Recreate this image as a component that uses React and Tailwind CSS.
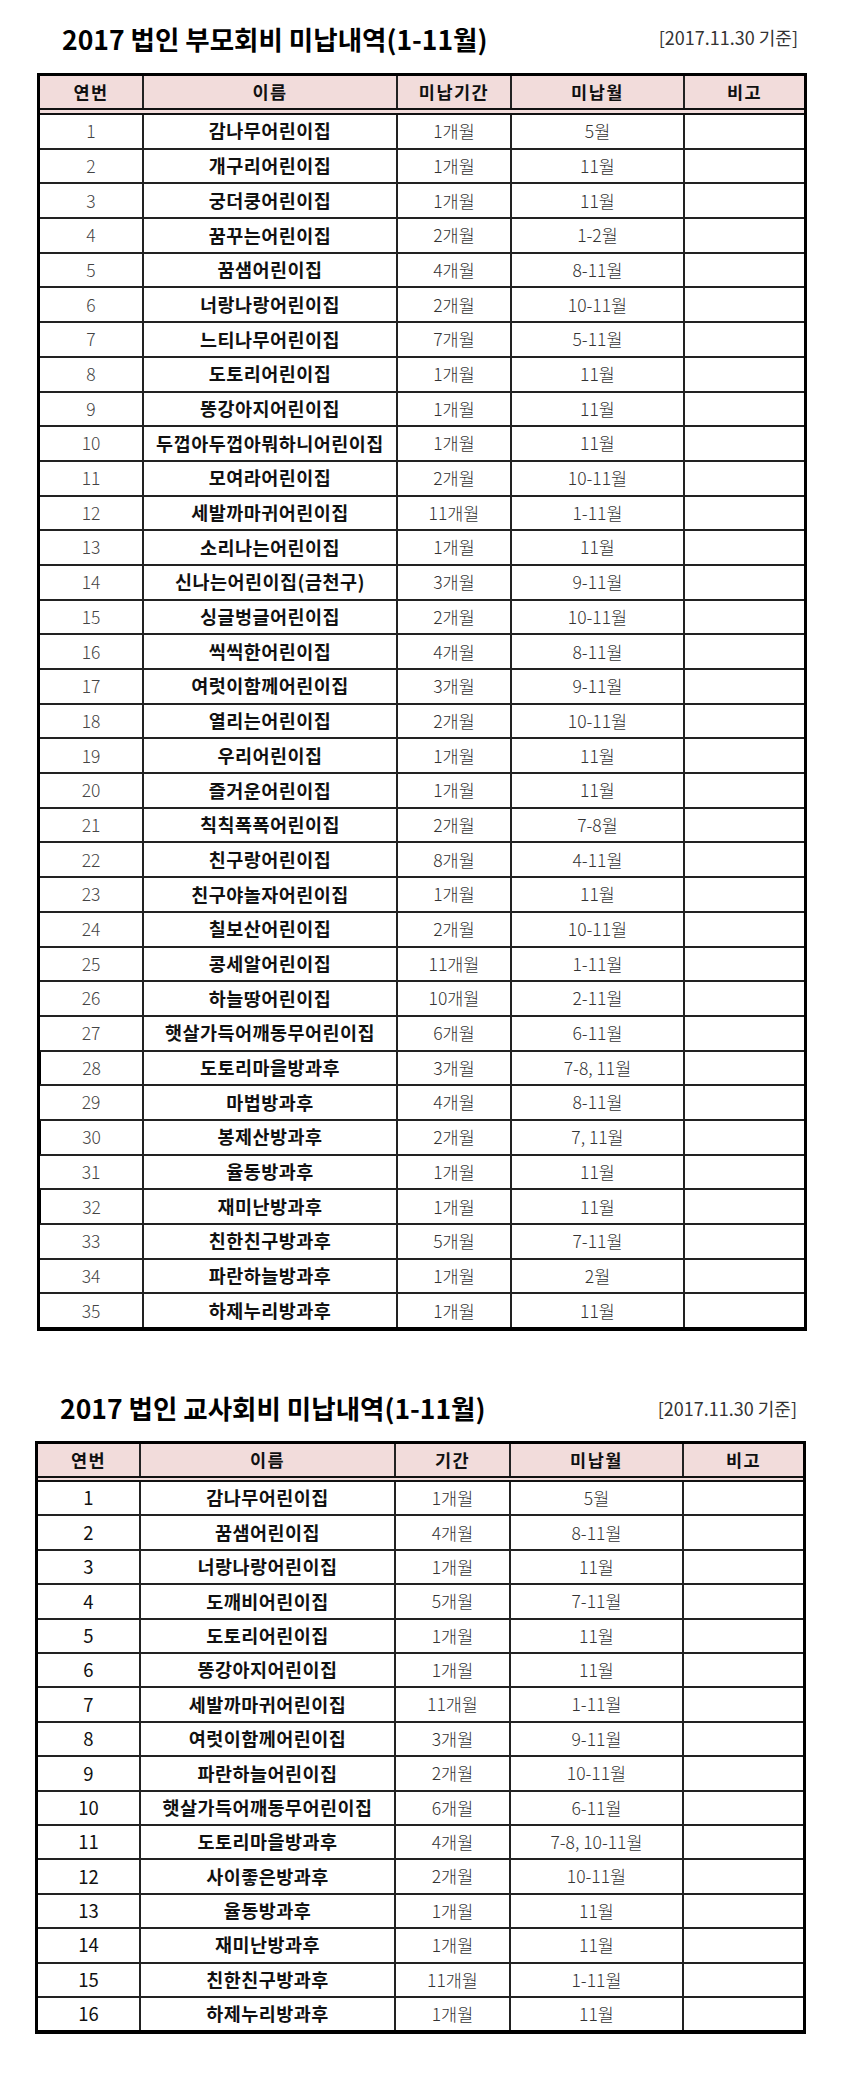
import React from "react";

const t1 = [
  ["1", "감나무어린이집", "1개월", "5월"],
  ["2", "개구리어린이집", "1개월", "11월"],
  ["3", "궁더쿵어린이집", "1개월", "11월"],
  ["4", "꿈꾸는어린이집", "2개월", "1-2월"],
  ["5", "꿈샘어린이집", "4개월", "8-11월"],
  ["6", "너랑나랑어린이집", "2개월", "10-11월"],
  ["7", "느티나무어린이집", "7개월", "5-11월"],
  ["8", "도토리어린이집", "1개월", "11월"],
  ["9", "똥강아지어린이집", "1개월", "11월"],
  ["10", "두껍아두껍아뭐하니어린이집", "1개월", "11월"],
  ["11", "모여라어린이집", "2개월", "10-11월"],
  ["12", "세발까마귀어린이집", "11개월", "1-11월"],
  ["13", "소리나는어린이집", "1개월", "11월"],
  ["14", "신나는어린이집(금천구)", "3개월", "9-11월"],
  ["15", "싱글벙글어린이집", "2개월", "10-11월"],
  ["16", "씩씩한어린이집", "4개월", "8-11월"],
  ["17", "여럿이함께어린이집", "3개월", "9-11월"],
  ["18", "열리는어린이집", "2개월", "10-11월"],
  ["19", "우리어린이집", "1개월", "11월"],
  ["20", "즐거운어린이집", "1개월", "11월"],
  ["21", "칙칙폭폭어린이집", "2개월", "7-8월"],
  ["22", "친구랑어린이집", "8개월", "4-11월"],
  ["23", "친구야놀자어린이집", "1개월", "11월"],
  ["24", "칠보산어린이집", "2개월", "10-11월"],
  ["25", "콩세알어린이집", "11개월", "1-11월"],
  ["26", "하늘땅어린이집", "10개월", "2-11월"],
  ["27", "햇살가득어깨동무어린이집", "6개월", "6-11월"],
  ["28", "도토리마을방과후", "3개월", "7-8, 11월"],
  ["29", "마법방과후", "4개월", "8-11월"],
  ["30", "봉제산방과후", "2개월", "7, 11월"],
  ["31", "율동방과후", "1개월", "11월"],
  ["32", "재미난방과후", "1개월", "11월"],
  ["33", "친한친구방과후", "5개월", "7-11월"],
  ["34", "파란하늘방과후", "1개월", "2월"],
  ["35", "하제누리방과후", "1개월", "11월"],
];

const t2 = [
  ["1", "감나무어린이집", "1개월", "5월"],
  ["2", "꿈샘어린이집", "4개월", "8-11월"],
  ["3", "너랑나랑어린이집", "1개월", "11월"],
  ["4", "도깨비어린이집", "5개월", "7-11월"],
  ["5", "도토리어린이집", "1개월", "11월"],
  ["6", "똥강아지어린이집", "1개월", "11월"],
  ["7", "세발까마귀어린이집", "11개월", "1-11월"],
  ["8", "여럿이함께어린이집", "3개월", "9-11월"],
  ["9", "파란하늘어린이집", "2개월", "10-11월"],
  ["10", "햇살가득어깨동무어린이집", "6개월", "6-11월"],
  ["11", "도토리마을방과후", "4개월", "7-8, 10-11월"],
  ["12", "사이좋은방과후", "2개월", "10-11월"],
  ["13", "율동방과후", "1개월", "11월"],
  ["14", "재미난방과후", "1개월", "11월"],
  ["15", "친한친구방과후", "11개월", "1-11월"],
  ["16", "하제누리방과후", "1개월", "11월"],
];

const FONT = { fontFamily: '"Noto Sans CJK KR", "Noto Sans", sans-serif' };

function Table1() {
  const w = ["w-[104px]", "w-[254px]", "w-[114px]", "w-[173px]", "flex-1"];
  const heads = ["연번", "이름", "미납기간", "미납월", "비고"];
  return (
    <div className="ml-[37px] w-[770px] border-[3px] border-b-4 border-black bg-white">
      <div className="flex h-[39px] bg-[#f2dcdb] border-b-[7px] border-double border-[#111]">
        {heads.map((h, i) => (
          <div
            key={h}
            className={`${w[i]} ${i < 4 ? "border-r-2 border-[#222]" : ""} flex items-center justify-center text-[17.5px] font-bold tracking-[1.5px] text-[#111]`}
          >
            {h}
          </div>
        ))}
      </div>
      {t1.map((r, idx) => {
        const last = idx === t1.length - 1;
        const special = r[0] === "28" || r[0] === "30" || r[0] === "32";
        return (
          <div
            key={r[0]}
            className={`flex ${last ? "h-[32.7px]" : "h-[34.7px] border-b-2 border-[#222]"}`}
          >
            <div className={`w-[104px] border-r-2 border-[#222] ${special ? "border-l-2 border-l-black -ml-[1px] w-[105px]" : ""} flex items-center justify-center text-[17.5px] font-light text-[#444]`}>
              {r[0]}
            </div>
            <div className="w-[254px] border-r-2 border-[#222] flex items-center justify-center text-[18.5px] font-bold tracking-[0.5px] text-[#111] whitespace-nowrap">
              {r[1]}
            </div>
            <div className="w-[114px] border-r-2 border-[#222] flex items-center justify-center text-[17.5px] font-light text-[#333]">
              {r[2]}
            </div>
            <div className="w-[173px] border-r-2 border-[#222] flex items-center justify-center text-[17.5px] font-light text-[#333]">
              {r[3]}
            </div>
            <div className="flex-1" />
          </div>
        );
      })}
    </div>
  );
}

function Table2() {
  const w = ["w-[103px]", "w-[255px]", "w-[115px]", "w-[173px]", "flex-1"];
  const heads = ["연번", "이름", "기간", "미납월", "비고"];
  return (
    <div className="ml-[35px] w-[771px] border-[3px] border-b-4 border-black bg-white">
      <div className="flex h-[38px] bg-[#f2dcdb] border-b-[6px] border-double border-[#111]">
        {heads.map((h, i) => (
          <div
            key={h}
            className={`${w[i]} ${i < 4 ? "border-r-2 border-[#222]" : ""} flex items-center justify-center text-[17.5px] font-bold tracking-[1.5px] text-[#111]`}
          >
            {h}
          </div>
        ))}
      </div>
      {t2.map((r, idx) => {
        const last = idx === t2.length - 1;
        return (
          <div
            key={r[0]}
            className={`flex ${last ? "h-[32.4px]" : "h-[34.4px] border-b-2 border-[#222]"}`}
          >
            <div className="w-[103px] border-r-2 border-[#222] flex items-center justify-center text-[18.5px] font-normal text-[#111]">
              {r[0]}
            </div>
            <div className="w-[255px] border-r-2 border-[#222] flex items-center justify-center text-[18.5px] font-bold tracking-[0.5px] text-[#111] whitespace-nowrap">
              {r[1]}
            </div>
            <div className="w-[115px] border-r-2 border-[#222] flex items-center justify-center text-[17.5px] font-light text-[#333]">
              {r[2]}
            </div>
            <div className="w-[173px] border-r-2 border-[#222] flex items-center justify-center text-[17.5px] font-light text-[#333]">
              {r[3]}
            </div>
            <div className="flex-1" />
          </div>
        );
      })}
    </div>
  );
}

export default function App() {
  return (
    <div className="w-[849px] h-[2079px] bg-white" style={FONT}>
      <div className="h-[73px] flex items-end justify-between pl-[62px] pr-[51px]">
        <div className="text-[26.5px] leading-none font-bold text-black pb-[21px] whitespace-nowrap">
          2017 법인 부모회비 미납내역(1-11월)
        </div>
        <div className="text-[18px] leading-none text-[#333] pb-[27px] whitespace-nowrap">
          [2017.11.30 기준]
        </div>
      </div>
      <Table1 />
      <div className="h-[110px] flex items-end justify-between pl-[60px] pr-[52px]">
        <div className="text-[26.5px] leading-none font-bold text-black pb-[20px] whitespace-nowrap">
          2017 법인 교사회비 미납내역(1-11월)
        </div>
        <div className="text-[18px] leading-none text-[#333] pb-[24px] whitespace-nowrap">
          [2017.11.30 기준]
        </div>
      </div>
      <Table2 />
    </div>
  );
}
